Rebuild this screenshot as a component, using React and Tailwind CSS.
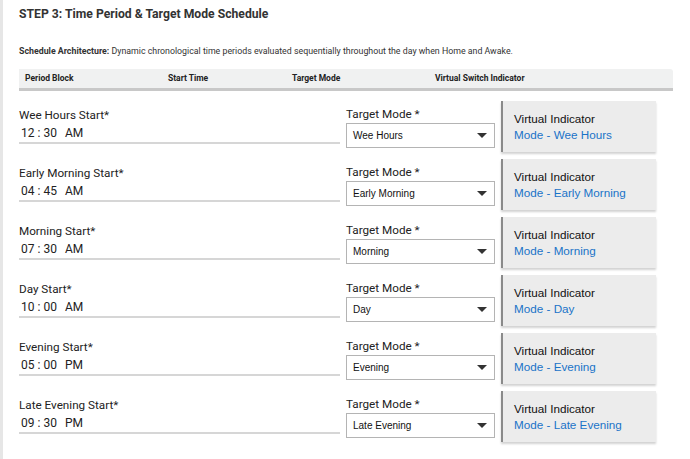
import React from "react";

const rows = [
  { label: "Wee Hours Start*", h: "12", m: "30", ap: "AM", mode: "Wee Hours" },
  { label: "Early Morning Start*", h: "04", m: "45", ap: "AM", mode: "Early Morning" },
  { label: "Morning Start*", h: "07", m: "30", ap: "AM", mode: "Morning" },
  { label: "Day Start*", h: "10", m: "00", ap: "AM", mode: "Day" },
  { label: "Evening Start*", h: "05", m: "00", ap: "PM", mode: "Evening" },
  { label: "Late Evening Start*", h: "09", m: "30", ap: "PM", mode: "Late Evening" },
];

const Caret = () => (
  <svg width="10" height="6" viewBox="0 0 10 6" className="shrink-0">
    <path d="M0 0 L10 0 L5 5 Z" fill="#333" />
  </svg>
);

const PeriodRow = ({ row }) => (
  <div className="flex h-[58px] items-start">
    <div className="mt-[7px] w-[321px] border-b-2 border-[#d6d6d6] pb-[2px]">
      <div className="text-[11.7px] leading-[14px] text-[#222]">{row.label}</div>
      <div className="mt-[4px] flex items-center pl-[2px] text-[12px] leading-[14px] text-[#222]">
        <span>{row.h}</span>
        <span className="mx-[3px]">:</span>
        <span>{row.m}</span>
        <span className="ml-[8px]">{row.ap}</span>
      </div>
    </div>
    <div className="ml-[6px] mt-[6px] w-[149px]">
      <div className="text-[11.7px] leading-[14px] text-[#222]">Target Mode *</div>
      <div className="mt-[2px] flex h-[25px] items-center justify-between border border-[#b4b4b4] bg-white pl-[6px] pr-[7px] font-['Liberation_Sans',sans-serif] text-[10px] text-[#111]">
        <span>{row.mode}</span>
        <Caret />
      </div>
    </div>
    <div className="ml-[6px] flex h-[51px] w-[155px] flex-col justify-center border-l-2 border-[#8a8a8a] bg-[#ececec] pl-[11px] font-['Liberation_Sans',sans-serif] text-[11.7px] leading-[16px] shadow-[0_2px_2px_rgba(0,0,0,0.18)]">
      <div className="text-[#111]">Virtual Indicator</div>
      <div className="text-[#1a73c8]">Mode - {row.mode}</div>
    </div>
  </div>
);

export default function App() {
  return (
    <div className="flex h-[459px] w-[690px] overflow-hidden bg-white font-['Roboto',sans-serif]">
      <div className="w-[3px] shrink-0 bg-[#e6e6e6]" />
      <div className="flex-1 pl-[16px]">
        <h2 className="mt-[6px] text-[12.2px] font-bold leading-[16px] text-[#333]">
          STEP 3: Time Period &amp; Target Mode Schedule
        </h2>
        <p className="mt-[23px] text-[8.8px] leading-[12px] text-[#333]">
          <span className="font-bold">Schedule Architecture:</span> Dynamic chronological time periods evaluated sequentially throughout the day when Home and Awake.
        </p>
        <div className="mt-[12px] flex h-[22px] w-[654px] items-center rounded-tr-[3px] border-b-[3px] border-[#c8c8c8] bg-[#f0f1f1] text-[8.5px] font-bold text-[#222]">
          <div className="w-[149px] pl-[6px]">Period Block</div>
          <div className="w-[124px]">Start Time</div>
          <div className="w-[143px]">Target Mode</div>
          <div>Virtual Switch Indicator</div>
        </div>
        <div className="mt-[10px] flex flex-col">
          {rows.map((r) => (
            <PeriodRow key={r.label} row={r} />
          ))}
        </div>
      </div>
    </div>
  );
}
